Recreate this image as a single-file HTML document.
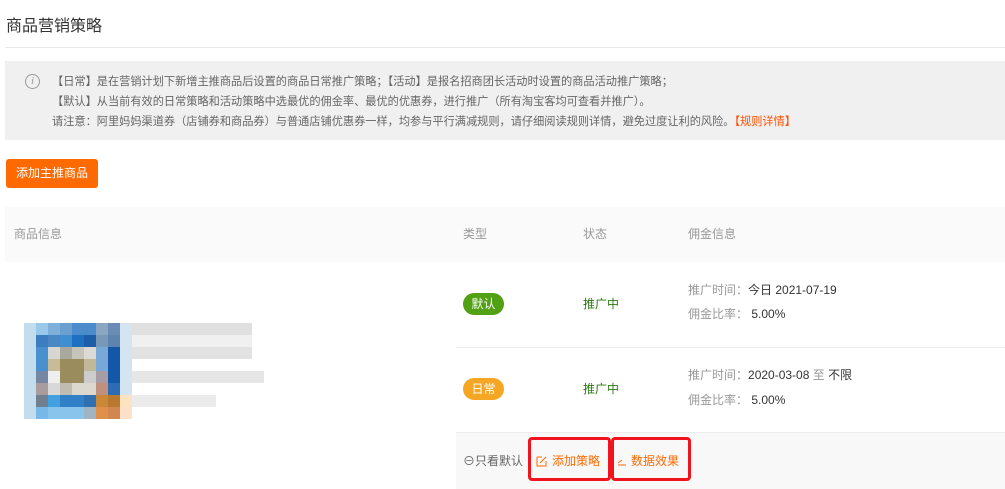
<!DOCTYPE html>
<html><head><meta charset="utf-8"><style>
body{margin:0;width:1005px;height:488px;background:#fff;font-family:"Liberation Sans","Noto Sans CJK SC",sans-serif;color:#333;position:relative;overflow:hidden}
.a{position:absolute;white-space:nowrap}
.t{font-size:12px;line-height:14px}
.n{font-size:11.2px;line-height:14px;color:#666}
</style></head><body>
<div class="a" style="left:6px;top:17px;font-size:16px;line-height:20px;color:#333">商品营销策略</div>
<div class="a" style="left:5px;top:47px;width:1000px;height:1px;background:#e8e8e8"></div>
<div class="a" style="left:5px;top:61px;width:1000px;height:79px;background:#f0f0f0"></div>
<div class="a" style="left:25px;top:74px;width:13px;height:13px;border:1px solid #999;border-radius:50%;font:italic 11px/13px 'Liberation Serif',serif;color:#999;text-align:center">i</div>
<div class="a n" style="left:52px;top:75px">【日常】是在营销计划下新增主推商品后设置的商品日常推广策略；【活动】是报名招商团长活动时设置的商品活动推广策略；</div>
<div class="a n" style="left:52px;top:95px">【默认】从当前有效的日常策略和活动策略中选最优的佣金率、最优的优惠券，进行推广（所有淘宝客均可查看并推广）。</div>
<div class="a n" style="left:52px;top:115px">请注意：阿里妈妈渠道券（店铺券和商品券）与普通店铺优惠券一样，均参与平行满减规则，请仔细阅读规则详情，避免过度让利的风险。<span style="color:#ff5000">【规则详情】</span></div>
<div class="a t" style="left:6px;top:159px;width:92px;height:29px;background:#ff6a00;border-radius:3px;color:#fff;line-height:29px;text-align:center">添加主推商品</div>
<div class="a" style="left:5px;top:207px;width:1000px;height:55px;background:#fafafa"></div>
<div class="a t" style="left:14px;top:227px;color:#999">商品信息</div>
<div class="a t" style="left:463px;top:227px;color:#999">类型</div>
<div class="a t" style="left:583px;top:227px;color:#999">状态</div>
<div class="a t" style="left:688px;top:227px;color:#999">佣金信息</div>
<svg class="a" style="left:24px;top:323px" width="240" height="100">
<g>
<rect x="0" y="0" width="12" height="96" fill="#c3ddef"/>
<rect x="12" y="0" width="12" height="12" fill="#98c8ea"/><rect x="24" y="0" width="12" height="12" fill="#7fb0dc"/><rect x="36" y="0" width="12" height="12" fill="#6a9fd0"/><rect x="48" y="0" width="12" height="12" fill="#4a8ccc"/><rect x="60" y="0" width="12" height="12" fill="#4a8ccc"/><rect x="72" y="0" width="12" height="12" fill="#8ba6c2"/><rect x="84" y="0" width="12" height="12" fill="#6a8cb4"/>
<rect x="12" y="12" width="12" height="12" fill="#3c7cc0"/><rect x="24" y="12" width="12" height="12" fill="#4a88c4"/><rect x="36" y="12" width="12" height="12" fill="#3e8ed0"/><rect x="48" y="12" width="12" height="12" fill="#1e70c0"/><rect x="60" y="12" width="12" height="12" fill="#1e5ea8"/><rect x="72" y="12" width="12" height="12" fill="#7898b8"/><rect x="84" y="12" width="12" height="12" fill="#5c84ac"/>
<rect x="12" y="24" width="12" height="24" fill="#4890d0"/><rect x="24" y="24" width="12" height="12" fill="#d8d6d0"/><rect x="36" y="24" width="12" height="12" fill="#a8a89c"/><rect x="48" y="24" width="12" height="12" fill="#c4c4b8"/><rect x="60" y="24" width="12" height="12" fill="#dcdad4"/><rect x="72" y="24" width="12" height="24" fill="#78a8d8"/><rect x="84" y="24" width="12" height="48" fill="#1456a8"/>
<rect x="24" y="36" width="12" height="12" fill="#c8bc98"/><rect x="36" y="36" width="24" height="24" fill="#9a8c5c"/><rect x="60" y="36" width="12" height="12" fill="#c0b898"/>
<rect x="12" y="48" width="12" height="12" fill="#7488a4"/><rect x="24" y="48" width="12" height="12" fill="#eeeeee"/><rect x="60" y="48" width="12" height="12" fill="#cccccc"/><rect x="72" y="48" width="12" height="12" fill="#a89ca4"/>
<rect x="12" y="60" width="12" height="12" fill="#a89c9c"/><rect x="24" y="60" width="12" height="12" fill="#d8d8d8"/><rect x="36" y="60" width="12" height="12" fill="#c0bcb0"/><rect x="48" y="60" width="24" height="12" fill="#dcd8d0"/><rect x="72" y="60" width="12" height="12" fill="#c0907c"/><rect x="84" y="60" width="12" height="12" fill="#2c6cb4"/>
<rect x="12" y="72" width="12" height="12" fill="#708090"/><rect x="24" y="72" width="12" height="12" fill="#40a0e0"/><rect x="36" y="72" width="24" height="12" fill="#3080c8"/><rect x="60" y="72" width="12" height="12" fill="#3070b0"/><rect x="72" y="72" width="12" height="12" fill="#c88838"/><rect x="84" y="72" width="12" height="12" fill="#b87830"/><rect x="96" y="72" width="12" height="12" fill="#fce4c0"/>
<rect x="12" y="84" width="12" height="12" fill="#78b8e8"/><rect x="24" y="84" width="36" height="12" fill="#88c4ec"/><rect x="60" y="84" width="12" height="12" fill="#a0b4c4"/><rect x="72" y="84" width="12" height="12" fill="#e09048"/><rect x="84" y="84" width="12" height="12" fill="#d08850"/><rect x="96" y="84" width="12" height="12" fill="#fce0c8"/>
<rect x="96" y="0" width="12" height="72" fill="#d4e4f0"/>
<rect x="108" y="0" width="120" height="12" fill="#e0e0e0"/><rect x="108" y="12" width="120" height="12" fill="#f0f0f0"/><rect x="108" y="24" width="120" height="12" fill="#e2e2e2"/><rect x="108" y="48" width="132" height="12" fill="#e6e6e6"/><rect x="108" y="72" width="84" height="12" fill="#ebebeb"/>
</g></svg>
<div class="a" style="left:456px;top:347px;width:549px;height:1px;background:#ececec"></div>
<div class="a" style="left:456px;top:432px;width:549px;height:56px;background:#f8f8f8;border-top:1px solid #ececec"></div>
<div class="a t" style="left:463px;top:293px;width:41px;height:22px;border-radius:11px;background:#52a014;color:#fff;line-height:22px;text-align:center">默认</div>
<div class="a t" style="left:463px;top:378px;width:41px;height:22px;border-radius:11px;background:#f5a623;color:#fff;line-height:22px;text-align:center">日常</div>
<div class="a t" style="left:583px;top:297px;color:#2a7a10">推广中</div>
<div class="a t" style="left:583px;top:382px;color:#2a7a10">推广中</div>
<div class="a t" style="left:688px;top:283px;color:#999">推广时间：<span style="color:#333">今日 2021-07-19</span></div>
<div class="a t" style="left:688px;top:307px;color:#999">佣金比率：&nbsp;<span style="color:#333">5.00%</span></div>
<div class="a t" style="left:688px;top:368px;color:#999">推广时间：<span style="color:#333">2020-03-08 <span style="color:#999">至</span> 不限</span></div>
<div class="a t" style="left:688px;top:393px;color:#999">佣金比率：&nbsp;<span style="color:#333">5.00%</span></div>
<div class="a t" style="left:463px;top:454px;color:#666">⊖只看默认</div>
<div class="a" style="left:528px;top:437px;width:77px;height:38px;border:3px solid #f0141e;border-radius:4px"></div>
<div class="a" style="left:611px;top:437px;width:74px;height:38px;border:3px solid #f0141e;border-radius:4px"></div>
<svg class="a" style="left:536px;top:455px" width="12" height="12"><path d="M1 2H6M1 2V11H10V6M4 8L10 2" stroke="#ff6a00" fill="none"/></svg>
<div class="a t" style="left:552px;top:454px;color:#ff6a00">添加策略</div>
<svg class="a" style="left:617px;top:455px" width="10" height="12"><path d="M1 10H9M1 8L5 5" stroke="#ff6a00" fill="none"/></svg>
<div class="a t" style="left:631px;top:454px;color:#ff6a00">数据效果</div>
</body></html>
